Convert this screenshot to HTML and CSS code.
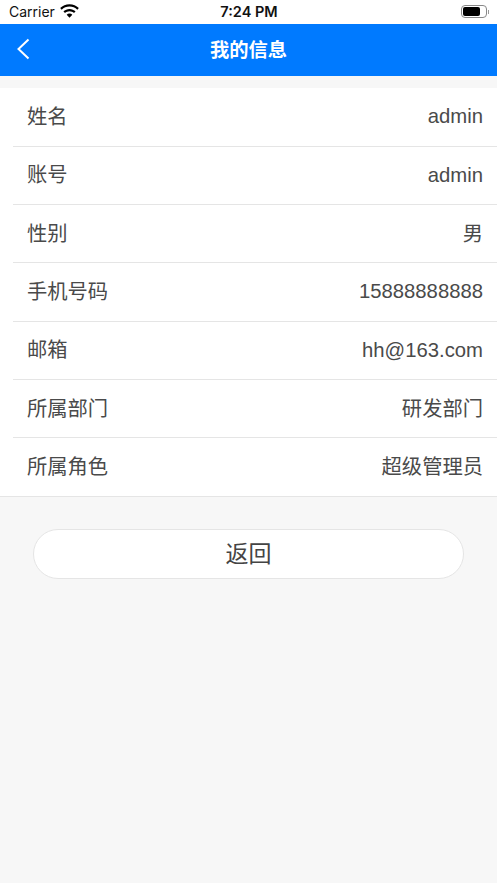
FILE: index.html
```html
<!DOCTYPE html>
<html lang="zh">
<head>
<meta charset="utf-8">
<title>我的信息</title>
<link rel="stylesheet" href="styles.css">
</head>
<body>
<div class="status">
  <div class="status-left">
    <span>Carrier</span>
    <svg class="wifi" viewBox="1 0 16 12" width="19" height="14"><path d="M9 2.200c2.600 0 4.900 1 6.700 2.700l1.300-1.400C14.900 1.400 12.100.2 9 .2S3.100 1.400 1 3.500l1.300 1.400C4.100 3.200 6.400 2.200 9 2.200z"/><path d="M9 6.200c1.500 0 2.800.6 3.900 1.500l1.300-1.400C12.800 5 11 4.200 9 4.200s-3.800.8-5.200 2.100l1.300 1.400C6.200 6.800 7.500 6.200 9 6.200z"/><path d="M9 8.200c-1 0-1.800.4-2.400 1L9 11.800l2.400-2.600c-.6-.6-1.400-1-2.400-1z"/></svg>
  </div>
  <div class="status-time">7:24 PM</div>
  <div class="battery"><span class="battery-body"><span class="battery-fill"></span></span><span class="battery-cap"></span></div>
</div>
<header class="nav">
  <svg class="back" viewBox="0 0 14 22" width="14" height="22"><path d="M12.500 1.500 2.500 11l10 9.500" fill="none" stroke="#fff" stroke-width="2"/></svg>
  <h1>我的信息</h1>
</header>
<ul class="list">
  <li class="row"><span class="label">姓名</span><span>admin</span></li>
  <li class="row"><span class="label">账号</span><span>admin</span></li>
  <li class="row"><span class="label">性别</span><span class="label">男</span></li>
  <li class="row"><span class="label">手机号码</span><span>15888888888</span></li>
  <li class="row"><span class="label">邮箱</span><span>hh@163.com</span></li>
  <li class="row"><span class="label">所属部门</span><span class="label">研发部门</span></li>
  <li class="row"><span class="label">所属角色</span><span class="label">超级管理员</span></li>
</ul>
<div class="actions"><button class="btn" type="button">返回</button></div>
</body>
</html>
```
FILE: styles.css
```css
* { box-sizing: border-box; }
html, body { margin: 0; padding: 0; }
body {
  width: 497px;
  height: 883px;
  overflow: hidden;
  background: #f7f7f7;
  font-family: "Liberation Sans", "Noto Sans CJK SC", sans-serif;
  color: #444;
}
.status {
  height: 24px;
  background: #fff;
  color: #111;
  display: grid;
  grid-template-columns: 1fr auto 1fr;
  align-items: center;
  padding: 0 8px 1px 9px;
  font-family: Inter, "Liberation Sans", sans-serif;
  font-size: 14px;
}
.status-left { display: flex; align-items: center; gap: 5px; }
.wifi { fill: #000; margin-bottom: 2px; }
.status-time { font-weight: 600; font-size: 14.500px; }
.battery { justify-self: end; display: flex; align-items: center; }
.battery-body {
  width: 26px; height: 13px; border: 1px solid #888; border-radius: 4px; padding: 1px; display: block;
}
.battery-fill { display: block; width: 17px; height: 9px; background: #000; border-radius: 2px; }
.battery-cap { width: 1px; height: 4px; background: #999; margin-left: 1px; }
.nav {
  height: 52px;
  background: #007aff;
  display: flex;
  align-items: center;
  justify-content: center;
  position: relative;
}
.nav h1 { margin: 0 0 2px; color: #fff; font-size: 19.300px; font-weight: 700; }
.back { position: absolute; left: 16px; top: 14px; }
.list {
  list-style: none;
  margin: 12px 0 0;
  padding: 0 0 0 13px;
  background: #fff;
  border-bottom: 1px solid #e5e5e5;
}
.row {
  height: 58.300px;
  display: flex;
  justify-content: space-between;
  align-items: center;
  padding: 0 14px 0 14px;
  font-size: 20.300px;
  color: #4a4a4a;
  border-bottom: 1px solid #e5e5e5;
}
.row:first-child { height: 58.700px; }
.row:last-child { border-bottom: 0; }
.label { padding-bottom: 4px; }
.actions { padding: 32px 33px 0; }
.btn {
  display: block;
  width: 100%;
  height: 50px;
  padding: 0 0 5px;
  border: 1px solid #e5e5e5;
  border-radius: 25px;
  background: #fff;
  font: inherit;
  font-size: 23px;
  color: #444;
}
```
